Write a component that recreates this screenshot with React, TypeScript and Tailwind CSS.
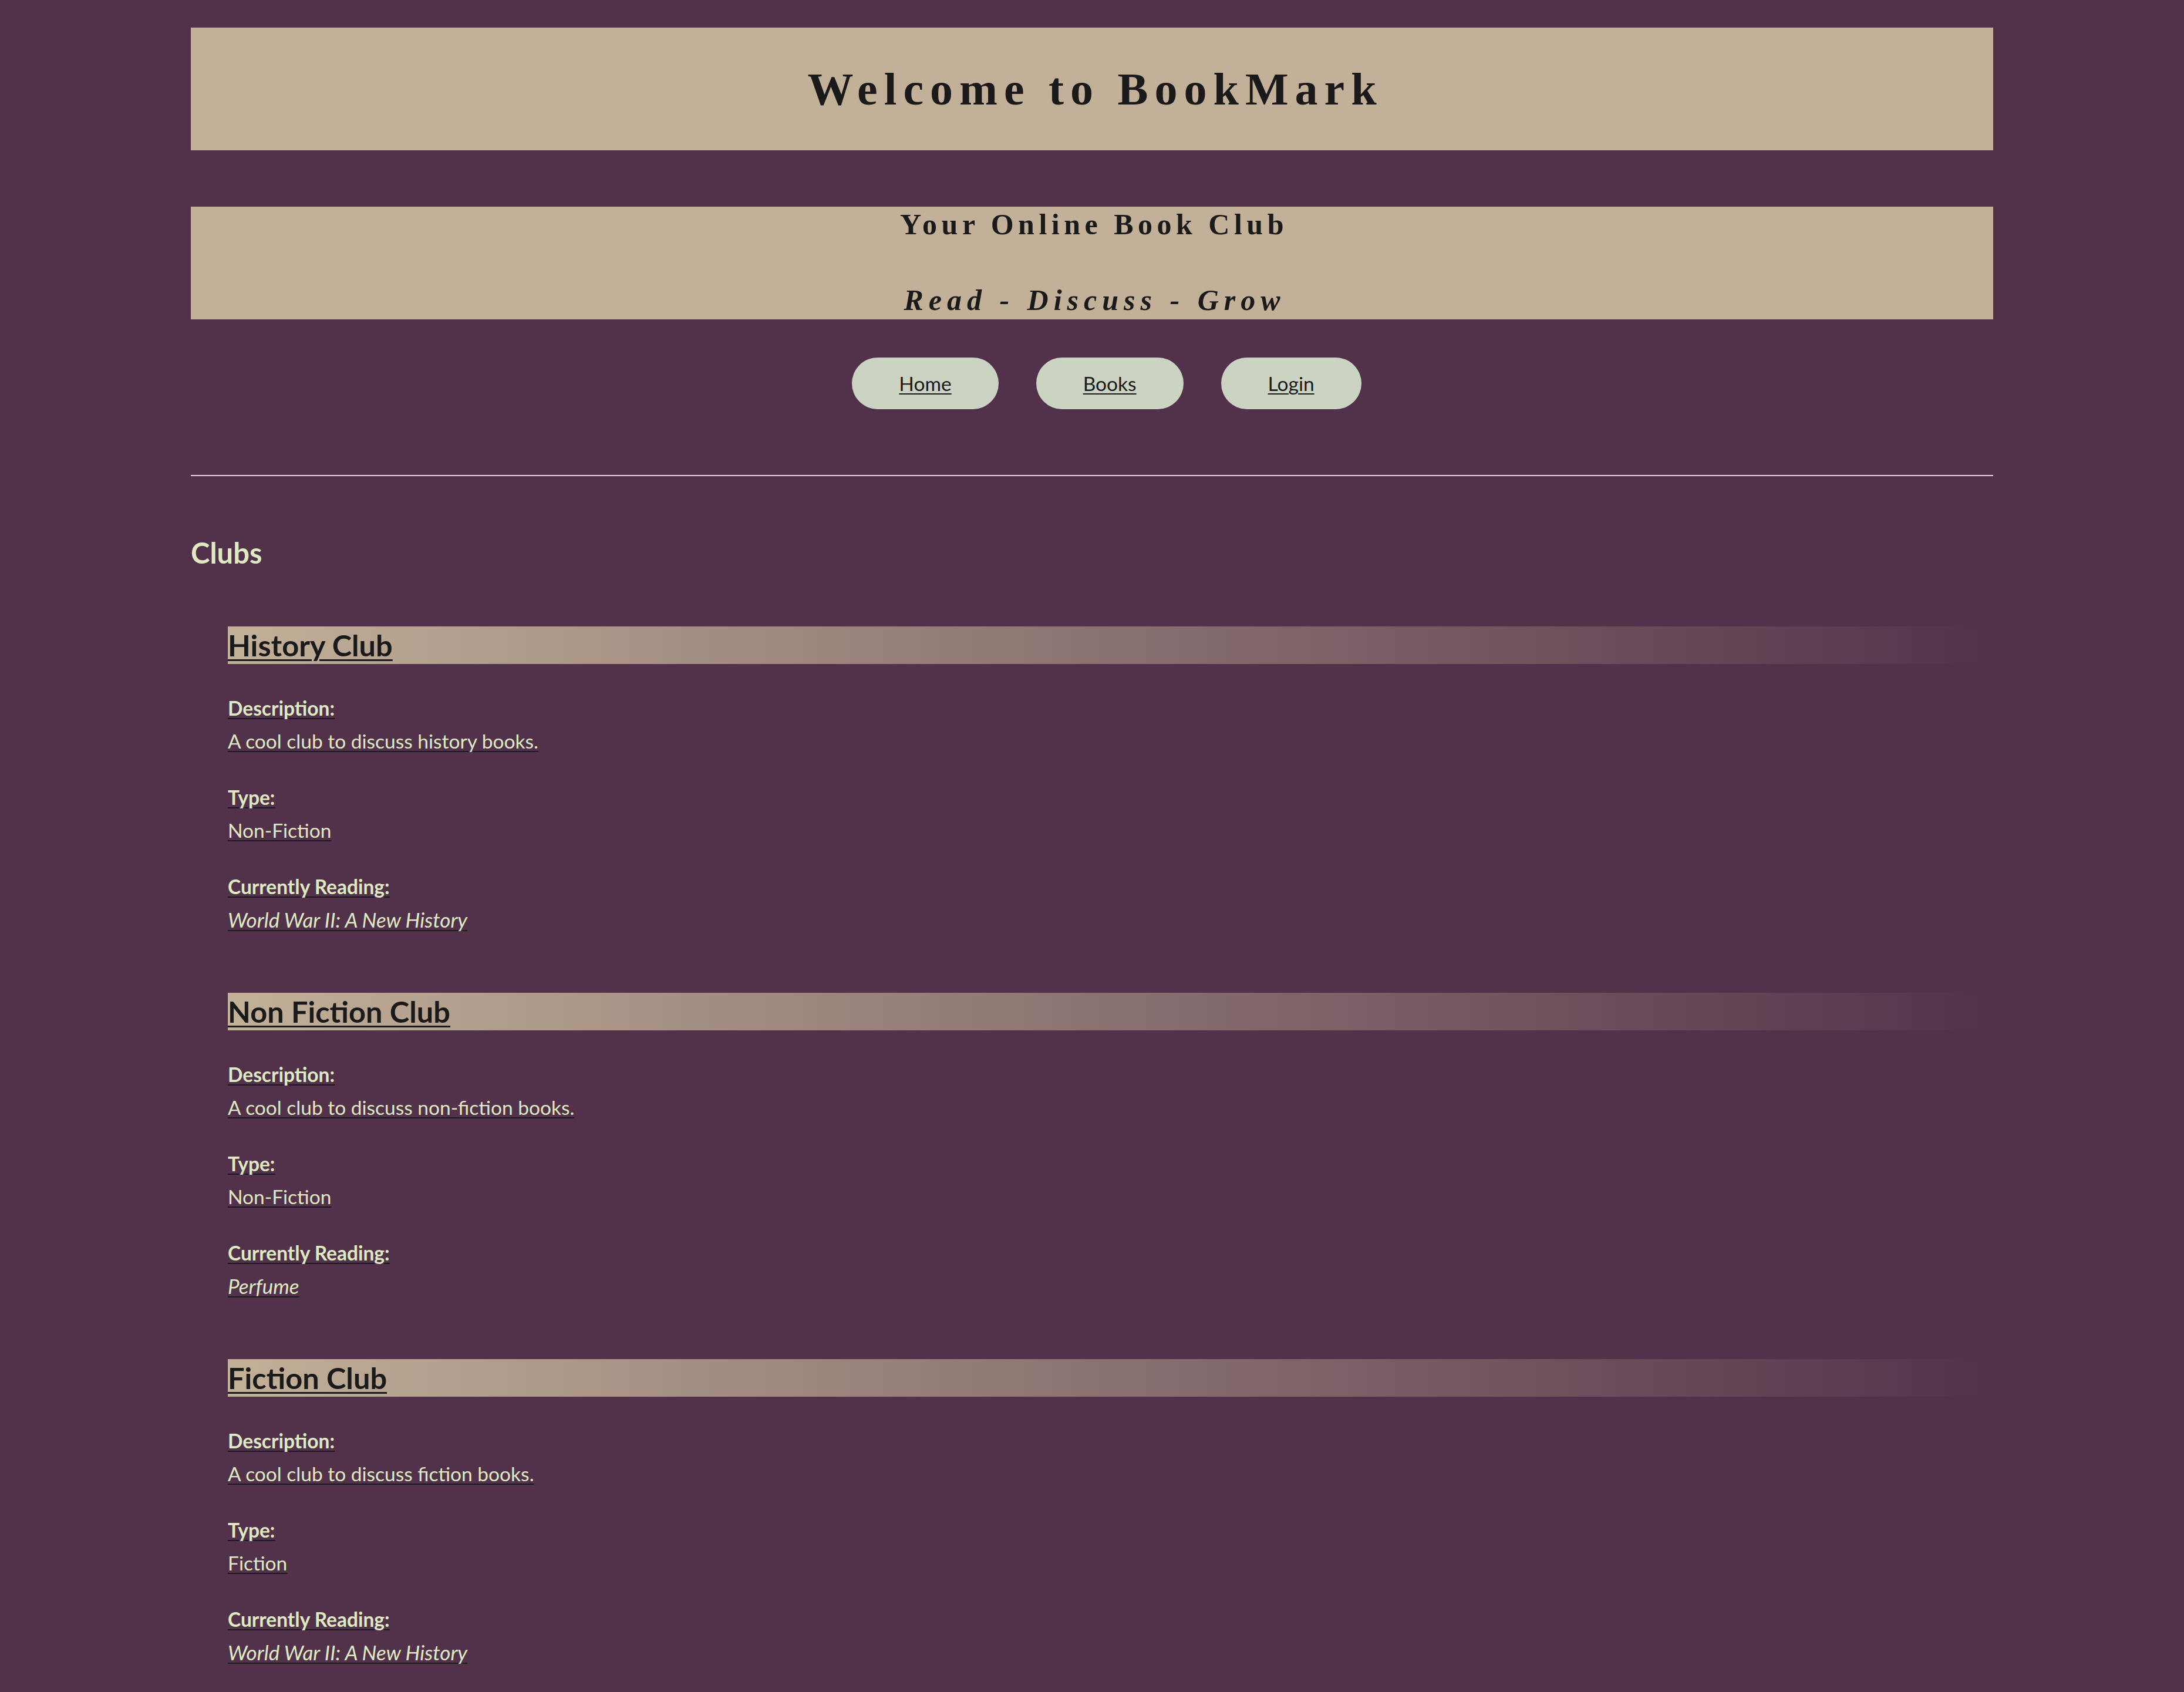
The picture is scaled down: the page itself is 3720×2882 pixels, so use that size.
import React from "react";

type Club = { name: string; description: string; type: string; reading: string };

const clubs: Club[] = [
  {
    name: "History Club",
    description: "A cool club to discuss history books.",
    type: "Non-Fiction",
    reading: "World War II: A New History",
  },
  {
    name: "Non Fiction Club",
    description: "A cool club to discuss non-fiction books.",
    type: "Non-Fiction",
    reading: "Perfume",
  },
  {
    name: "Fiction Club",
    description: "A cool club to discuss fiction books.",
    type: "Fiction",
    reading: "World War II: A New History",
  },
];

function Field({ label, value, italic }: { label: string; value: string; italic?: boolean }) {
  return (
    <div className="flex flex-col items-start">
      <span className="text-[33.5px] leading-[56px] font-bold underline decoration-[#1c1a1c] decoration-2 underline-offset-[4px]">
        {label}
      </span>
      <span
        className={
          italic
            ? "text-[35px] leading-[56px] italic underline decoration-[#1c1a1c] decoration-2 underline-offset-[4px]"
            : "text-[33.5px] leading-[56px] underline decoration-[#1c1a1c] decoration-2 underline-offset-[4px]"
        }
      >
        {value}
      </span>
    </div>
  );
}

function ClubCard({ club, first }: { club: Club; first: boolean }) {
  return (
    <section className={first ? "mt-[98px]" : "mt-[97px]"}>
      <h3 className="h-[64px] leading-[64px] text-[50.5px] font-bold text-[#1a1a1a] bg-[linear-gradient(to_right,#c2b098,rgba(194,176,152,0))]">
        <span className="underline decoration-[3px] underline-offset-[5px] decoration-[#1a1a1a]">{club.name}</span>
      </h3>
      <div className="mt-[47px] flex flex-col gap-[40px]">
        <Field label="Description:" value={club.description} />
        <Field label="Type:" value={club.type} />
        <Field label="Currently Reading:" value={club.reading} italic />
      </div>
    </section>
  );
}

export default function App() {
  return (
    <div className="min-h-screen bg-[#52324a] pt-[47px] pb-[41px] font-['Lato',sans-serif] text-[#dfeac3]">
      <div className="w-[3070px] mx-auto">
        <header className="h-[209px] bg-[#c2b098] flex items-center justify-center">
          <h1 className="font-['Liberation_Serif',serif] font-bold text-[78px] leading-none tracking-[11px] text-[#1a1a1a] pl-[11px]">
            Welcome to BookMark
          </h1>
        </header>

        <div className="mt-[96px] bg-[#c2b098] pb-[3px] text-center font-['Liberation_Serif',serif] font-bold text-[#1a1a1a]">
          <p className="text-[50px] leading-[60px] tracking-[7.5px] pl-[7px]">Your Online Book Club</p>
          <p className="mt-[69px] text-[50px] leading-[60px] tracking-[9px] italic pl-[9px]">Read - Discuss - Grow</p>
        </div>

        <nav className="mt-[65px] flex justify-center gap-[64px] pl-[50px]">
          {["Home", "Books", "Login"].map((l) => (
            <a
              key={l}
              href="#"
              className="block rounded-full bg-[#cbd4c2] px-[80px] py-[22px] text-[33.5px] leading-[44px] text-[#1a1a1a] underline decoration-2 underline-offset-[4px]"
            >
              {l}
            </a>
          ))}
        </nav>

        <hr className="mt-[112px] border-0 border-t-2 border-[#ddd6da]" />

        <h2 className="mt-[102px] text-[49px] leading-[56px] font-bold">Clubs</h2>

        <div className="pl-[63px]">
          {clubs.map((c, i) => (
            <ClubCard key={c.name} club={c} first={i === 0} />
          ))}
        </div>
      </div>
    </div>
  );
}
